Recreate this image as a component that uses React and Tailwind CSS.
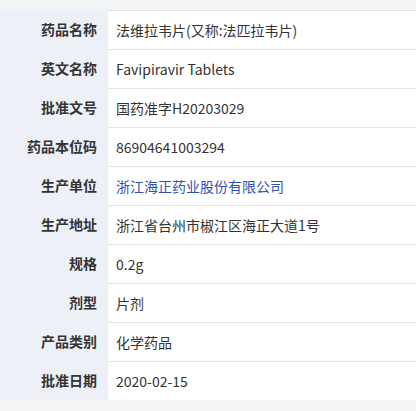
import React from "react";

const rows = [
  { label: "药品名称", value: "法维拉韦片(又称:法匹拉韦片)" },
  { label: "英文名称", value: "Favipiravir Tablets" },
  { label: "批准文号", value: "国药准字H20203029" },
  { label: "药品本位码", value: "86904641003294" },
  { label: "生产单位", value: "浙江海正药业股份有限公司", link: true },
  { label: "生产地址", value: "浙江省台州市椒江区海正大道1号" },
  { label: "规格", value: "0.2g" },
  { label: "剂型", value: "片剂" },
  { label: "产品类别", value: "化学药品" },
  { label: "批准日期", value: "2020-02-15" },
];

export default function App() {
  return (
    <div
      className="w-[416px] h-[411px] bg-[#f3f4f6] pt-[10px] overflow-hidden text-[14px] text-[#333]"
      style={{ fontFamily: '"Noto Sans CJK SC", "Noto Sans", sans-serif' }}
    >
      <div className="flex flex-col">
        {rows.map((row, i) => (
          <div key={row.label} className="flex h-[39px]">
            <div className="w-[108px] shrink-0 bg-[#eef0f8] flex items-center justify-end pr-[11px] font-bold">
              {row.label}
            </div>
            <div
              className={`flex-1 bg-white flex items-center pl-[8px] border-t border-[#e3e3e3] ${
                row.link ? "text-[#2f52b0]" : ""
              }`}
            >
              {row.value}
            </div>
          </div>
        ))}
      </div>
    </div>
  );
}
